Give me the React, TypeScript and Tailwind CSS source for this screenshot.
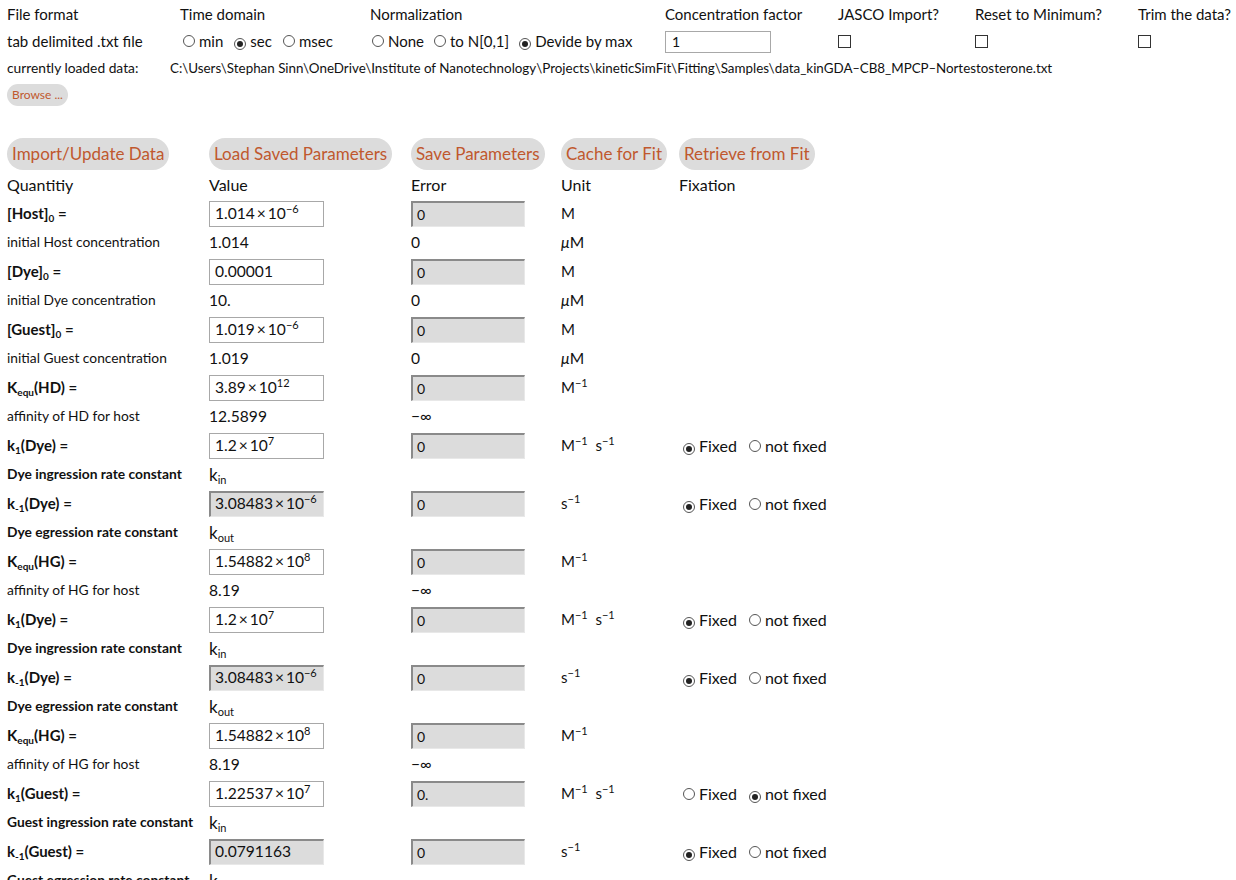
import React from "react";

const font = { fontFamily: "Lato, 'Noto Sans', sans-serif" };

function Radio({ checked }: { checked?: boolean }) {
    return (
        <span className="mr-[4px] inline-flex h-[12px] w-[12px] items-center justify-center rounded-full border border-[#555] bg-white align-[0px]">
            {checked && <span className="h-[6px] w-[6px] rounded-full bg-[#222]" />}
        </span>
    );
}

function Check() {
    return <span className="inline-block h-[13px] w-[13px] border border-[#333] bg-white" />;
}

function Pill({ children, small }: { children: React.ReactNode; small?: boolean }) {
    return (
        <span
            className={
                small
                    ? "inline-flex h-[22px] items-center rounded-full bg-[#dcdcdc] px-[5px] text-[12px] text-[#c0582e]"
                    : "inline-flex h-[32px] items-center rounded-full bg-[#dcdcdc] px-[5px] text-[17px] text-[#c0582e]"
            }
        >
            {children}
        </span>
    );
}

const sub = (s: string) => <sub className="text-[10px]">{s}</sub>;
const sup = (s: string) => <sup className="top-[-6px] text-[11px]">{s}</sup>;

function Pow({ base, exp }: { base: string; exp: string }) {
    return (
        <span>
            {base}
            {"\u2009\u00d7\u200910"}
            {sup(exp)}
        </span>
    );
}

function ValueBox({ children, locked }: { children: React.ReactNode; locked?: boolean }) {
    return (
        <div
            className={
                locked
                    ? "flex h-[26px] w-[115px] items-center border-t-2 border-l-2 border-r border-b border-t-[#8a8a8a] border-l-[#8a8a8a] border-r-[#e8e8e8] border-b-[#e8e8e8] bg-[#dcdcdc] px-[4px] text-[15.6px]"
                    : "flex h-[26px] w-[115px] items-center border border-[#a8a8a8] bg-white px-[5px] text-[15.6px]"
            }
        >
            {children}
        </div>
    );
}

function ErrBox({ v }: { v: string }) {
    return (
        <div className="flex h-[26px] w-[114px] items-center border-t-2 border-l-2 border-r border-b border-t-[#8a8a8a] border-l-[#8a8a8a] border-r-[#e8e8e8] border-b-[#e8e8e8] bg-[#dcdcdc] px-[4px] text-[14px]">
            {v}
        </div>
    );
}

type Row = {
    label: React.ReactNode;
    value: React.ReactNode;
    locked?: boolean;
    err: string;
    unit: React.ReactNode;
    fix?: "fixed" | "free";
    desc: string;
    descBold?: boolean;
    dValue: React.ReactNode;
    dErr: string;
    dUnit?: React.ReactNode;
};

const kin = <span className="text-[17px]">k<sub className="text-[11px]">in</sub></span>;
const kout = <span className="text-[17px]">k<sub className="text-[11px]">out</sub></span>;
const mu = <span><i>μ</i>M</span>;
const invMs = <span>M{sup("−1")}&nbsp; s{sup("−1")}</span>;

const rows: Row[] = [
    { label: <>[Host]{sub("0")} =</>, value: <Pow base="1.014" exp="−6" />, err: "0", unit: "M", desc: "initial Host concentration", dValue: "1.014", dErr: "0", dUnit: mu },
    { label: <>[Dye]{sub("0")} =</>, value: "0.00001", err: "0", unit: "M", desc: "initial Dye concentration", dValue: "10.", dErr: "0", dUnit: mu },
    { label: <>[Guest]{sub("0")} =</>, value: <Pow base="1.019" exp="−6" />, err: "0", unit: "M", desc: "initial Guest concentration", dValue: "1.019", dErr: "0", dUnit: mu },
    { label: <>K{sub("equ")}(HD) =</>, value: <Pow base="3.89" exp="12" />, err: "0", unit: <>M{sup("−1")}</>, desc: "affinity of HD for host", dValue: "12.5899", dErr: "−∞" },
    { label: <>k{sub("1")}(Dye) =</>, value: <Pow base="1.2" exp="7" />, err: "0", unit: invMs, fix: "fixed", desc: "Dye ingression rate constant", descBold: true, dValue: kin, dErr: "" },
    { label: <>k{sub("-1")}(Dye) =</>, value: <Pow base="3.08483" exp="−6" />, locked: true, err: "0", unit: <>s{sup("−1")}</>, fix: "fixed", desc: "Dye egression rate constant", descBold: true, dValue: kout, dErr: "" },
    { label: <>K{sub("equ")}(HG) =</>, value: <Pow base="1.54882" exp="8" />, err: "0", unit: <>M{sup("−1")}</>, desc: "affinity of HG for host", dValue: "8.19", dErr: "−∞" },
    { label: <>k{sub("1")}(Dye) =</>, value: <Pow base="1.2" exp="7" />, err: "0", unit: invMs, fix: "fixed", desc: "Dye ingression rate constant", descBold: true, dValue: kin, dErr: "" },
    { label: <>k{sub("-1")}(Dye) =</>, value: <Pow base="3.08483" exp="−6" />, locked: true, err: "0", unit: <>s{sup("−1")}</>, fix: "fixed", desc: "Dye egression rate constant", descBold: true, dValue: kout, dErr: "" },
    { label: <>K{sub("equ")}(HG) =</>, value: <Pow base="1.54882" exp="8" />, err: "0", unit: <>M{sup("−1")}</>, desc: "affinity of HG for host", dValue: "8.19", dErr: "−∞" },
    { label: <>k{sub("1")}(Guest) =</>, value: <Pow base="1.22537" exp="7" />, err: "0.", unit: invMs, fix: "free", desc: "Guest ingression rate constant", descBold: true, dValue: kin, dErr: "" },
    { label: <>k{sub("-1")}(Guest) =</>, value: "0.0791163", locked: true, err: "0", unit: <>s{sup("−1")}</>, fix: "fixed", desc: "Guest egression rate constant", descBold: true, dValue: kout, dErr: "" },
];

const grid = "grid grid-cols-[202px_202px_150px_118px_1fr]";

export default function App() {
    return (
        <div className="min-h-[880px] bg-white pl-[7px] text-[#111]" style={font}>
            {/* import settings */}
            <div className="grid grid-cols-[173px_190px_295px_173px_137px_163px_1fr] text-[15px]">
                <div className="flex h-[28px] items-center">File format</div>
                <div className="flex items-center">Time domain</div>
                <div className="flex items-center">Normalization</div>
                <div className="flex items-center">Concentration factor</div>
                <div className="flex items-center">JASCO Import?</div>
                <div className="flex items-center">Reset to Minimum?</div>
                <div className="flex items-center">Trim the data?</div>

                <div className="flex h-[27px] items-center">tab delimited .txt file</div>
                <div className="flex items-center gap-[11px] pl-[3px]">
                    <span><Radio />min</span>
                    <span><Radio checked />sec</span>
                    <span><Radio />msec</span>
                </div>
                <div className="flex items-center gap-[10px] pl-[2px]">
                    <span><Radio />None</span>
                    <span><Radio />to N[0,1]</span>
                    <span><Radio checked />Devide by max</span>
                </div>
                <div className="flex items-center">
                    <div className="flex h-[22px] w-[106px] items-center border border-[#a8a8a8] px-[6px] text-[14px]">1</div>
                </div>
                <div className="flex items-center"><Check /></div>
                <div className="flex items-center"><Check /></div>
                <div className="flex items-center"><Check /></div>
            </div>
            <div className="flex h-[27px] items-center text-[13.4px]">
                <span className="w-[163px] text-[13.8px]">currently loaded data:</span>
                <span>C:\Users\Stephan Sinn\OneDrive\Institute of Nanotechnology\Projects\kineticSimFit\Fitting\Samples\data_kinGDA‒CB8_MPCP‒Nortestosterone.txt</span>
            </div>
            <div className="mt-[2px] flex h-[22px]">
                <Pill small>Browse ...</Pill>
            </div>

            {/* action buttons */}
            <div className="mt-[32px] flex h-[32px] items-center">
                <span className="flex w-[202px]"><Pill>Import/Update Data</Pill></span>
                <span className="flex w-[202px]"><Pill>Load Saved Parameters</Pill></span>
                <span className="flex w-[150px]"><Pill>Save Parameters</Pill></span>
                <span className="flex w-[118px]"><Pill>Cache for Fit</Pill></span>
                <span className="flex"><Pill>Retrieve from Fit</Pill></span>
            </div>

            <div className={grid + " h-[29px] items-center text-[16px]"}>
                <div>Quantitiy</div>
                <div>Value</div>
                <div>Error</div>
                <div>Unit</div>
                <div>Fixation</div>
            </div>

            {rows.map((r, i) => (
                <div key={i}>
                    <div className={grid + " h-[29px] items-center text-[15px]"}>
                        <div className="text-[15px] font-bold">{r.label}</div>
                        <div><ValueBox locked={r.locked}>{r.value}</ValueBox></div>
                        <div><ErrBox v={r.err} /></div>
                        <div>{r.unit}</div>
                        <div className="flex items-center gap-[12px] pl-[4px] text-[16px]">
                            {r.fix && (
                                <>
                                    <span><Radio checked={r.fix === "fixed"} />Fixed</span>
                                    <span><Radio checked={r.fix === "free"} />not fixed</span>
                                </>
                            )}
                        </div>
                    </div>
                    <div className={grid + " h-[29px] items-center text-[15.6px]"}>
                        <div className={r.descBold ? "text-[13.8px] font-bold" : "text-[13.8px]"}>{r.desc}</div>
                        <div>{r.dValue}</div>
                        <div>{r.dErr}</div>
                        <div>{r.dUnit}</div>
                        <div />
                    </div>
                </div>
            ))}
        </div>
    );
}
